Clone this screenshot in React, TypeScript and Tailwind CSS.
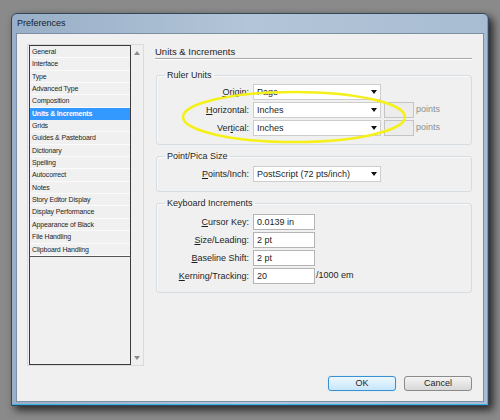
import React from "react";

const items = [
  "General",
  "Interface",
  "Type",
  "Advanced Type",
  "Composition",
  "Units & Increments",
  "Grids",
  "Guides & Pasteboard",
  "Dictionary",
  "Spelling",
  "Autocorrect",
  "Notes",
  "Story Editor Display",
  "Display Performance",
  "Appearance of Black",
  "File Handling",
  "Clipboard Handling",
];

function Arrow({ up = false, color = "#111" }: { up?: boolean; color?: string }) {
  return (
    <svg width="6" height="4" viewBox="0 0 6 4">
      {up ? <polygon points="0,4 6,4 3,0" fill={color} /> : <polygon points="0,0 6,0 3,4" fill={color} />}
    </svg>
  );
}

function Label({ pre = "", u, post }: { pre?: string; u: string; post: string }) {
  return (
    <div className="w-[92px] text-right text-[9px] leading-[16px] text-[#1e1e1e]">
      {pre}
      <span className="underline underline-offset-[1px]">{u}</span>
      {post}
    </div>
  );
}

function Select({ value }: { value: string }) {
  return (
    <div className="ml-[4px] w-[128px] h-[16px] bg-white border border-[#cdcdcd] flex items-center justify-between pl-[3px] pr-[3px]">
      <span className="text-[9px] leading-[14px] text-[#1e1e1e]">{value}</span>
      <Arrow />
    </div>
  );
}

function Input({ value }: { value: string }) {
  return (
    <div className="ml-[4px] w-[62px] h-[16px] bg-white border border-[#b4b4b4] flex items-center pl-[3px]">
      <span className="text-[9px] leading-[14px] text-[#1e1e1e]">{value}</span>
    </div>
  );
}

export default function App() {
  return (
    <div className="relative w-[500px] h-[420px] bg-[#8a8a8a] overflow-hidden pt-[13px] pl-[11px] font-['Liberation_Sans',Arial,sans-serif]">
      {/* window */}
      <div className="w-[478px] h-[393px] flex flex-col border border-[#34465a] rounded-t-[6px] bg-gradient-to-r from-[#98afc7] via-[#b3c5d8] to-[#a8bcd2] shadow-[inset_-1px_-1px_0_#38b2e6,4px_4px_9px_rgba(0,0,0,0.75)]">
        <div className="h-[19px] flex items-center pl-[5px] text-[9px] text-[#15202b]">Preferences</div>
        <div className="mx-[4px] h-[369px] border border-[#7b8ea3] bg-[#f0f0f0] flex">
          {/* list */}
          <div className="pl-[10px] pt-[10px]">
            <div className="flex w-[117px] h-[322px] border border-[#dadada] pl-[1px]">
              <div className="w-[102px] h-[320px] border border-[#3c3c3c] bg-[#f0f0f0] flex flex-col">
                <div className="border-b border-[#555555]">
                  {items.map((it) =>
                    it === "Units & Increments" ? (
                      <div
                        key={it}
                        className="h-[12.35px] bg-[#3399ff] text-white font-bold pl-[2px] text-[7px] leading-[12.35px] tracking-[-0.2px] whitespace-nowrap"
                      >
                        {it}
                      </div>
                    ) : (
                      <div
                        key={it}
                        className="h-[12.35px] border-b border-[#fbfbfb] text-[#1e1e1e] pl-[2px] text-[7px] leading-[11.35px] tracking-[-0.15px] whitespace-nowrap"
                      >
                        {it}
                      </div>
                    )
                  )}
                </div>
              </div>
              <div className="w-[12px] flex flex-col justify-between items-center pt-[6px] pb-[5px]">
                <Arrow up color="#8c8c8c" />
                <Arrow color="#8c8c8c" />
              </div>
            </div>
          </div>

          {/* right pane */}
          <div className="ml-[11px] w-[317px] flex flex-col pb-[10px]">
            <div className="h-[25px] pt-[12px] border-b border-[#a8a8a8] shadow-[0_1px_0_#ffffff] text-[9.5px] leading-[11px] text-[#1e1e1e]">
              Units &amp; Increments
            </div>

            <fieldset className="mt-[11px] ml-[1px] w-[316px] border border-[#d5dde3] rounded-[3px] pb-[8px] shadow-[inset_1px_1px_0_#fafafa]">
              <legend className="ml-[8px] px-[2px] text-[9px] leading-[10px] text-[#1e1e1e]">Ruler Units</legend>
              <div className="mt-[4px] flex flex-col gap-[2px]">
                <div className="flex items-center h-[16px]">
                  <Label u="O" post="rigin:" />
                  <Select value="Page" />
                </div>
                <div className="flex items-center h-[16px]">
                  <Label u="H" post="orizontal:" />
                  <Select value="Inches" />
                  <div className="ml-[3px] w-[30px] h-[16px] border border-[#c4c4c4] bg-[#ececec]" />
                  <span className="ml-[2px] text-[9px] text-[#8e8e8e]">points</span>
                </div>
                <div className="flex items-center h-[16px]">
                  <Label pre="Ver" u="t" post="ical:" />
                  <Select value="Inches" />
                  <div className="ml-[3px] w-[30px] h-[16px] border border-[#c4c4c4] bg-[#ececec]" />
                  <span className="ml-[2px] text-[9px] text-[#8e8e8e]">points</span>
                </div>
              </div>
            </fieldset>

            <fieldset className="mt-[6px] ml-[1px] w-[316px] border border-[#d5dde3] rounded-[3px] pb-[9px] shadow-[inset_1px_1px_0_#fafafa]">
              <legend className="ml-[8px] px-[2px] text-[9px] leading-[10px] text-[#1e1e1e]">Point/Pica Size</legend>
              <div className="mt-[5px] flex items-center h-[16px]">
                <Label u="P" post="oints/Inch:" />
                <Select value="PostScript (72 pts/inch)" />
              </div>
            </fieldset>

            <fieldset className="mt-[6px] ml-[1px] w-[316px] border border-[#d5dde3] rounded-[3px] pb-[8px] shadow-[inset_1px_1px_0_#fafafa]">
              <legend className="ml-[8px] px-[2px] text-[9px] leading-[10px] text-[#1e1e1e]">Keyboard Increments</legend>
              <div className="mt-[6px] flex flex-col gap-[2px]">
                <div className="flex items-center h-[16px]">
                  <Label u="C" post="ursor Key:" />
                  <Input value="0.0139 in" />
                </div>
                <div className="flex items-center h-[16px]">
                  <Label u="S" post="ize/Leading:" />
                  <Input value="2 pt" />
                </div>
                <div className="flex items-center h-[16px]">
                  <Label u="B" post="aseline Shift:" />
                  <Input value="2 pt" />
                </div>
                <div className="flex items-center h-[16px]">
                  <Label u="K" post="erning/Tracking:" />
                  <Input value="20" />
                  <span className="ml-[1px] text-[9px] text-[#1e1e1e]">/1000 em</span>
                </div>
              </div>
            </fieldset>

            <div className="mt-auto flex justify-end gap-[8px]">
              <div className="w-[68px] h-[15px] rounded-[3px] border border-[#3c8fd0] bg-gradient-to-b from-[#eef8fe] to-[#c6e6fb] shadow-[0_0_1px_#7fd0ff] flex items-center justify-center text-[9px] text-[#1e1e1e]">
                OK
              </div>
              <div className="w-[68px] h-[15px] rounded-[3px] border border-[#8a8a8a] bg-gradient-to-b from-[#f4f4f4] to-[#d8d8d8] flex items-center justify-center text-[9px] text-[#1e1e1e]">
                Cancel
              </div>
            </div>
          </div>
        </div>
      </div>

      {/* annotation ellipse */}
      <svg className="absolute left-0 top-0 pointer-events-none" width="500" height="420" viewBox="0 0 500 420">
        <ellipse cx="294" cy="117" rx="111" ry="25" fill="none" stroke="#f4f018" strokeWidth="2.5" />
      </svg>
    </div>
  );
}
